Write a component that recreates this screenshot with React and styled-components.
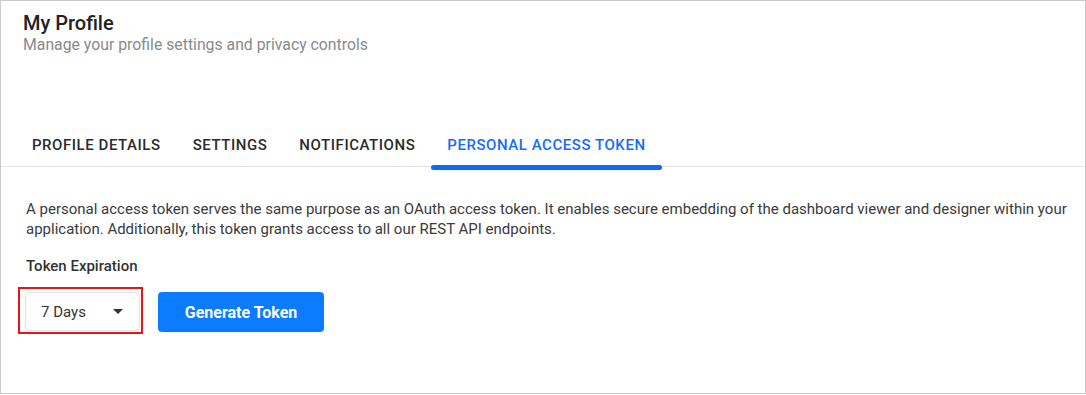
import React, { useState } from 'react'
import styled, { createGlobalStyle } from 'styled-components'

const GlobalStyle = createGlobalStyle`
  * { box-sizing: border-box; }
  body {
    margin: 0;
    font-family: Roboto, "Liberation Sans", Arial, sans-serif;
    background: #fff;
  }
`

const Page = styled.div`
  width: 1086px;
  height: 394px;
  border: 1px solid #c9c9c9;
  background: #fff;
`

const Header = styled.div`
  padding: 10px 22px 0;
`

const Title = styled.h1`
  margin: 0;
  font-size: 20px;
  line-height: 24px;
  font-weight: 500;
  color: #222;
`

const Subtitle = styled.p`
  margin: 0;
  font-size: 15.8px;
  line-height: 20px;
  color: #8a8a8a;
`

const TabBar = styled.div`
  display: flex;
  margin-top: 67px;
  padding-left: 15px;
  border-bottom: 1px solid #e3e3e3;
`

const Tab = styled.button`
  position: relative;
  border: none;
  background: none;
  padding: 13px 16px 11px;
  font-family: inherit;
  font-size: 15px;
  line-height: 20px;
  font-weight: 500;
  letter-spacing: 0.55px;
  text-transform: uppercase;
  color: ${p => (p.$active ? '#1769ff' : '#2b2b2b')};
  cursor: pointer;

  &::after {
    content: '';
    display: ${p => (p.$active ? 'block' : 'none')};
    position: absolute;
    left: 0;
    right: 0;
    bottom: -4px;
    height: 5px;
    border-radius: 3px;
    background: #0a6cf5;
  }
`

const Content = styled.div`
  padding: 32px 4px 0 25px;
`

const Description = styled.p`
  margin: 0;
  font-size: 15px;
  line-height: 20px;
  color: #3a3a3a;
`

const Label = styled.div`
  margin-top: 17px;
  font-size: 15px;
  line-height: 20px;
  font-weight: 500;
  color: #333;
`

const Controls = styled.div`
  display: flex;
  align-items: flex-start;
  gap: 15px;
  margin-top: 11px;
  margin-left: -8px;
`

const Highlight = styled.div`
  border: 2px solid #e8141c;
  padding: 3px 1px 1px 5px;
`

const Select = styled.div`
  display: flex;
  align-items: center;
  justify-content: space-between;
  width: 115px;
  height: 39px;
  padding: 0 16px 0 15px;
  border: 1px solid #e2e2e2;
  border-radius: 4px;
  font-size: 15px;
  color: #333;
  cursor: pointer;
`

const Caret = styled.span`
  width: 0;
  height: 0;
  border-left: 5px solid transparent;
  border-right: 5px solid transparent;
  border-top: 5px solid #333;
`

const Button = styled.button`
  width: 166px;
  height: 40px;
  margin-top: 5px;
  border: none;
  border-radius: 4px;
  background: #0b7bff;
  color: #fff;
  font-family: inherit;
  font-size: 16px;
  font-weight: 700;
  cursor: pointer;
`

const tabs = ['Profile Details', 'Settings', 'Notifications', 'Personal Access Token']

export default function App() {
  const [active, setActive] = useState(3)
  return (
    <>
      <GlobalStyle />
      <Page>
        <Header>
          <Title>My Profile</Title>
          <Subtitle>Manage your profile settings and privacy controls</Subtitle>
        </Header>
        <TabBar>
          {tabs.map((t, i) => (
            <Tab key={t} $active={i === active} onClick={() => setActive(i)}>
              {t}
            </Tab>
          ))}
        </TabBar>
        <Content>
          <Description>
            A personal access token serves the same purpose as an OAuth access token. It enables secure
            embedding of the dashboard viewer and designer within your application. Additionally, this
            token grants access to all our REST API endpoints.
          </Description>
          <Label>Token Expiration</Label>
          <Controls>
            <Highlight>
              <Select>
                7 Days
                <Caret />
              </Select>
            </Highlight>
            <Button>Generate Token</Button>
          </Controls>
        </Content>
      </Page>
    </>
  )
}
